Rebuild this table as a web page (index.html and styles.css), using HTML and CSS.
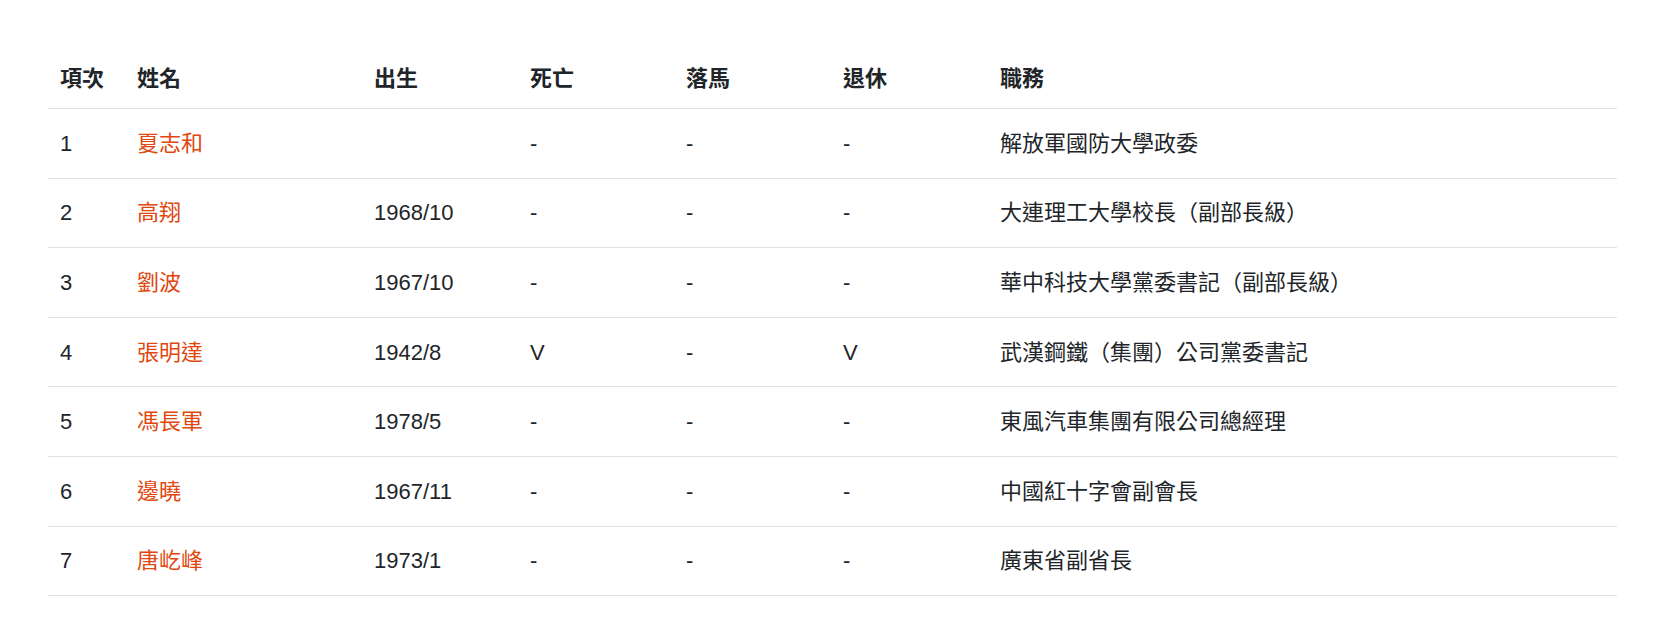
FILE: index.html
```html
<!DOCTYPE html>
<html lang="zh-Hant">
<head>
<meta charset="utf-8">
<title>名單</title>
<link rel="stylesheet" href="styles.css">
</head>
<body>
<div class="topbar"></div>
<main class="page">
  <table class="roster">
    <colgroup>
      <col class="c-no">
      <col class="c-name">
      <col class="c-birth">
      <col class="c-death">
      <col class="c-fall">
      <col class="c-retire">
      <col class="c-post">
    </colgroup>
    <thead>
      <tr>
        <th>項次</th>
        <th>姓名</th>
        <th>出生</th>
        <th>死亡</th>
        <th>落馬</th>
        <th>退休</th>
        <th>職務</th>
      </tr>
    </thead>
    <tbody>
      <tr><td>1</td><td><a class="person" href="#">夏志和</a></td><td></td><td>-</td><td>-</td><td>-</td><td>解放軍國防大學政委</td></tr>
      <tr><td>2</td><td><a class="person" href="#">高翔</a></td><td>1968/10</td><td>-</td><td>-</td><td>-</td><td>大連理工大學校長（副部長級）</td></tr>
      <tr><td>3</td><td><a class="person" href="#">劉波</a></td><td>1967/10</td><td>-</td><td>-</td><td>-</td><td>華中科技大學黨委書記（副部長級）</td></tr>
      <tr><td>4</td><td><a class="person" href="#">張明達</a></td><td>1942/8</td><td>V</td><td>-</td><td>V</td><td>武漢鋼鐵（集團）公司黨委書記</td></tr>
      <tr><td>5</td><td><a class="person" href="#">馮長軍</a></td><td>1978/5</td><td>-</td><td>-</td><td>-</td><td>東風汽車集團有限公司總經理</td></tr>
      <tr><td>6</td><td><a class="person" href="#">邊曉</a></td><td>1967/11</td><td>-</td><td>-</td><td>-</td><td>中國紅十字會副會長</td></tr>
      <tr><td>7</td><td><a class="person" href="#">唐屹峰</a></td><td>1973/1</td><td>-</td><td>-</td><td>-</td><td>廣東省副省長</td></tr>
    </tbody>
  </table>
</main>
</body>
</html>
```

FILE: styles.css
```css
html, body {
  margin: 0;
  padding: 0;
  background: #ffffff;
}

body {
  font-family: "Liberation Sans", "Noto Sans CJK TC", sans-serif;
  font-size: 22px;
  color: #212529;
}

.topbar {
  position: fixed;
  top: 0;
  left: 0;
  right: 0;
  height: 55px;
  background: #ffffff;
  box-shadow: 0 1px 3px rgba(0, 0, 0, 0.025);
  z-index: 2;
}

.page {
  padding: 48px 0 0 48px;
}

.roster {
  width: 1569px;
  border-collapse: collapse;
  table-layout: fixed;
}

.c-no { width: 77px; }
.c-name { width: 237px; }
.c-birth { width: 156px; }
.c-death { width: 156px; }
.c-fall { width: 157px; }
.c-retire { width: 157px; }

.roster th {
  text-align: left;
  font-weight: 700;
  line-height: 33px;
  padding: 13.5px 12px 13.5px 12px;
  border-bottom: 1px solid #dee2e6;
  white-space: nowrap;
}

.roster td {
  line-height: 33px;
  padding: 17.8px 12px 17.8px 12px;
  border-bottom: 1px solid #dee2e6;
  white-space: nowrap;
  vertical-align: middle;
}

.person {
  color: #e0480f;
  text-decoration: none;
}
```
